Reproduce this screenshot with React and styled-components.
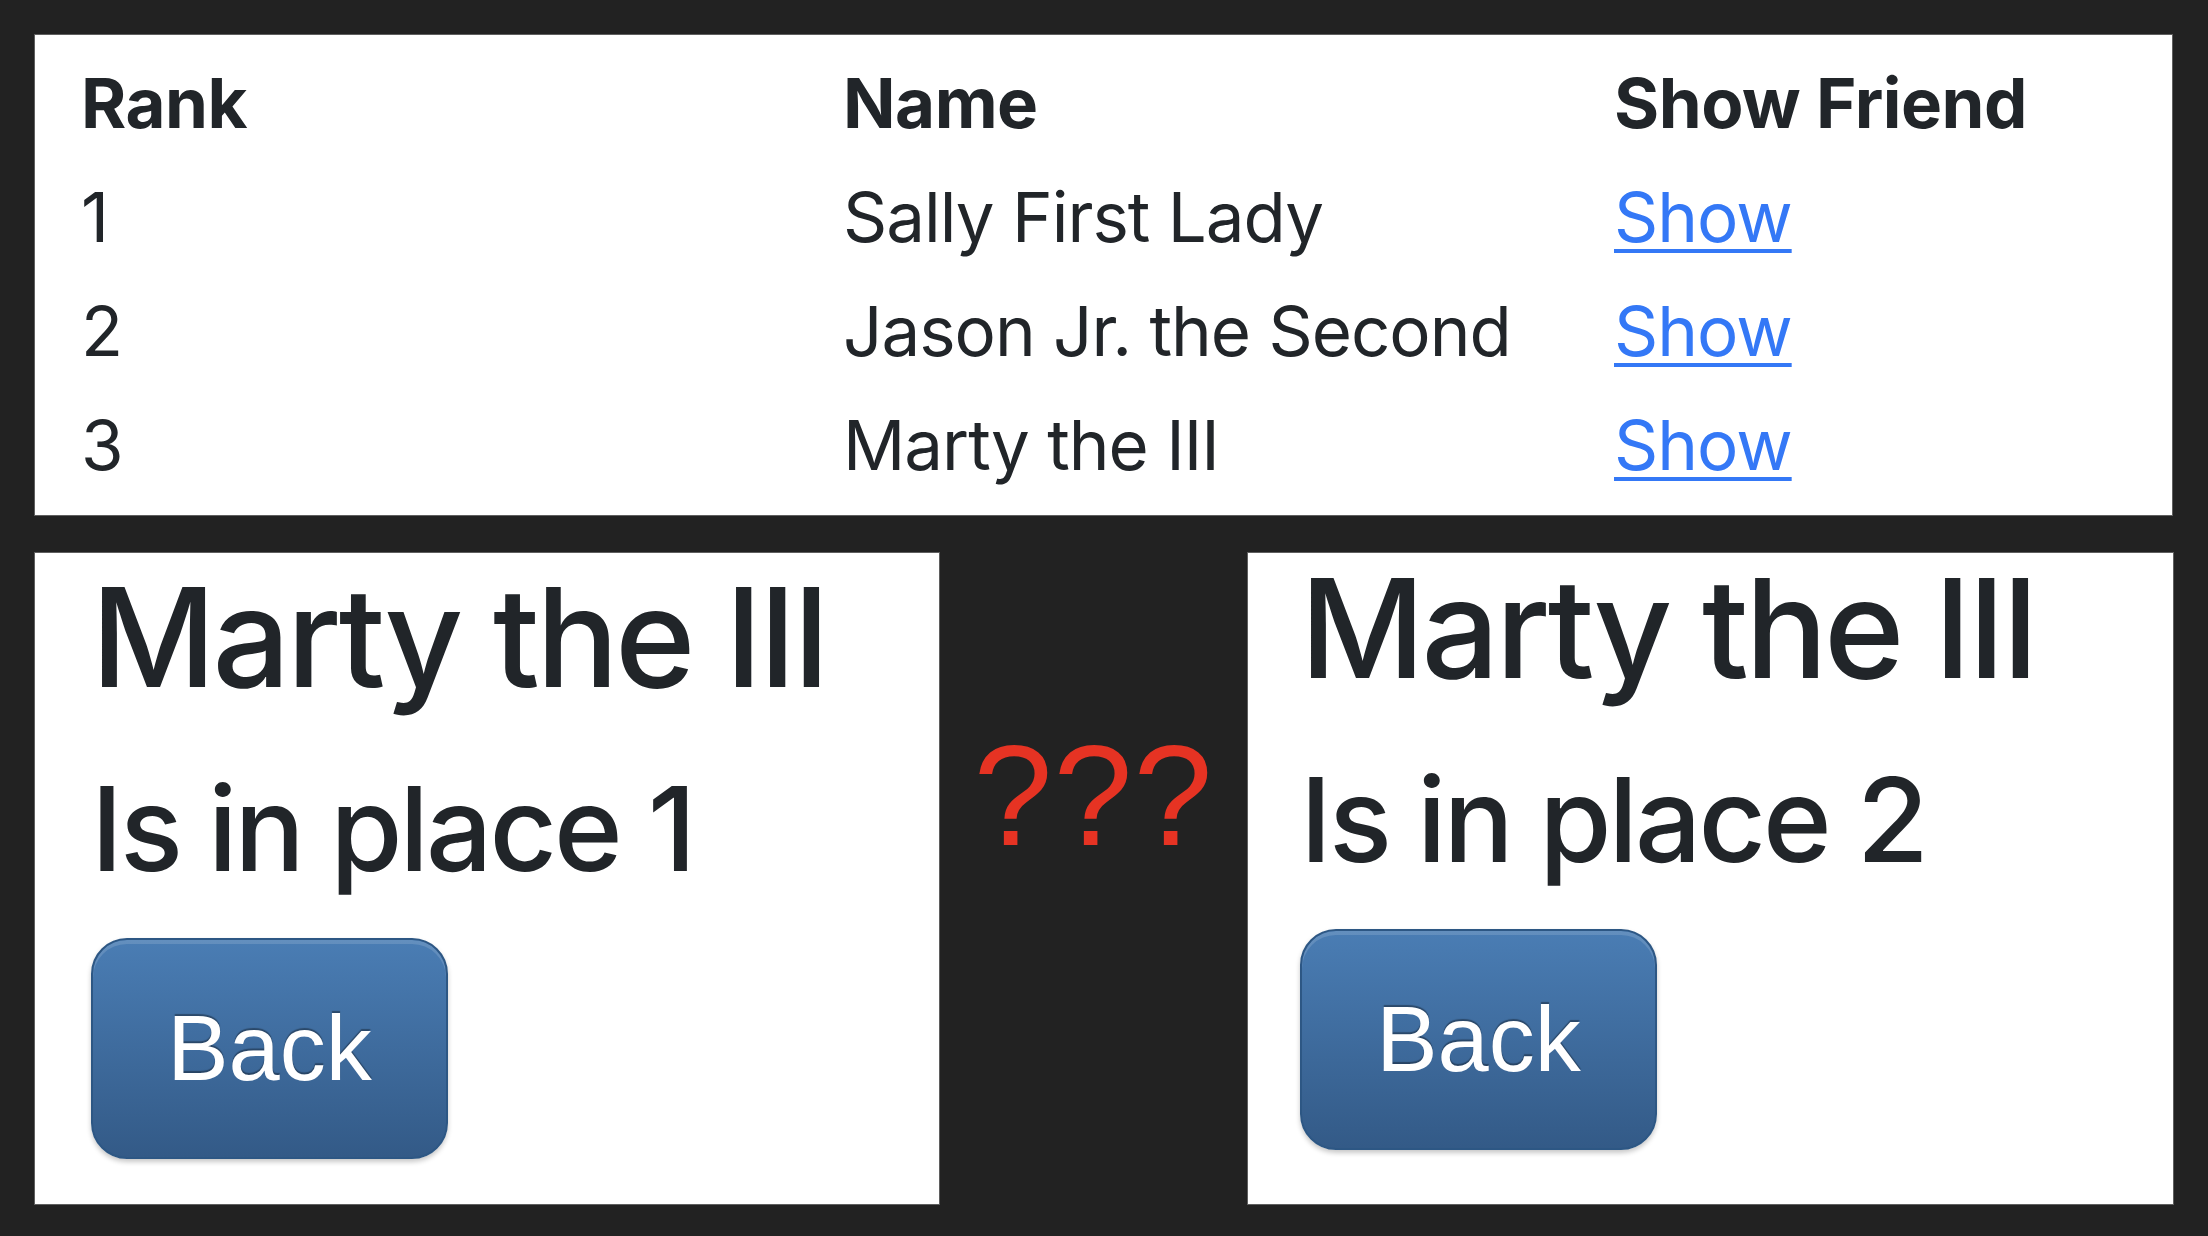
import React from "react";
import styled, { createGlobalStyle } from "styled-components";

const friends = [
  { rank: 1, name: "Sally First Lady" },
  { rank: 2, name: "Jason Jr. the Second" },
  { rank: 3, name: "Marty the III" },
];

const GlobalStyle = createGlobalStyle`
  html, body {
    margin: 0;
    padding: 0;
    background: #222222;
  }
  body {
    font-family: Inter, "Noto Sans", sans-serif;
    color: #212529;
  }
`;

const Page = styled.div`
  width: 2208px;
  height: 1236px;
  box-sizing: border-box;
  padding: 35px 35px 0 35px;
  display: flex;
  flex-direction: column;
  gap: 38px;
`;

const Panel = styled.div`
  background: #ffffff;
  box-shadow: 0 0 0 1px #5f5f5f;
`;

const TablePanel = styled(Panel)`
  width: 2137px;
  height: 480px;
  box-sizing: border-box;
  padding: 11px 0 0 46px;
`;

const Table = styled.table`
  border-collapse: collapse;
  table-layout: fixed;
  width: 2091px;
`;

const Col = styled.col`
  width: ${(p) => p.w}px;
`;

const Cell = styled.td`
  height: 114px;
  padding: 0;
  font-size: 69px;
  line-height: 114px;
  white-space: nowrap;
  letter-spacing: -1px;
  vertical-align: middle;
`;

const HeadCell = styled(Cell).attrs({ as: "th" })`
  font-weight: 700;
  text-align: left;
  letter-spacing: -0.5px;
`;

const ShowLink = styled.a`
  color: #3478f6;
  text-decoration: underline;
  text-decoration-thickness: 4px;
  text-underline-offset: 7px;
  cursor: pointer;
`;

const Bottom = styled.div`
  display: grid;
  grid-template-columns: 904px 309px 925px;
  height: 651px;
`;

const Card = styled(Panel)`
  box-sizing: border-box;
  padding: ${(p) => p.top}px 0 0 ${(p) => p.left}px;
`;

const Title = styled.h1`
  margin: 0 0 47px 0;
  font-size: 137px;
  line-height: 150px;
  font-weight: 500;
  letter-spacing: -3.5px;
`;

const Place = styled.h2`
  margin: 0 0 39px 0;
  font-size: 117px;
  line-height: 140px;
  font-weight: 500;
  letter-spacing: -3px;
`;

const BackButton = styled.button`
  width: 357px;
  height: 221px;
  box-sizing: border-box;
  border: 2px solid #2d5784;
  border-radius: 36px;
  background: linear-gradient(#4a7db4, #335a87);
  box-shadow: inset 0 4px 0 rgba(255, 255, 255, 0.14), 0 3px 5px rgba(0, 0, 0, 0.22);
  color: #ffffff;
  font-family: "Liberation Sans", Arial, sans-serif;
  font-size: 92px;
  text-shadow: 0 -2px 1px rgba(0, 0, 0, 0.35);
  padding: 0;
  cursor: pointer;
`;

const Middle = styled.div`
  display: flex;
  justify-content: center;
  padding-top: 172px;
`;

const Question = styled.span`
  font-family: "Liberation Sans", Arial, sans-serif;
  font-size: 142px;
  line-height: 142px;
  color: #e63323;
  letter-spacing: 1px;
`;

const FriendCard = ({ top, left, place }) => (
  <Card top={top} left={left}>
    <Title>Marty the III</Title>
    <Place>Is in place {place}</Place>
    <BackButton>Back</BackButton>
  </Card>
);

export default function App() {
  return (
    <>
      <GlobalStyle />
      <Page>
        <TablePanel>
          <Table>
            <colgroup>
              <Col w={762} />
              <Col w={771} />
              <Col w={558} />
            </colgroup>
            <thead>
              <tr>
                <HeadCell>Rank</HeadCell>
                <HeadCell>Name</HeadCell>
                <HeadCell>Show Friend</HeadCell>
              </tr>
            </thead>
            <tbody>
              {friends.map((f) => (
                <tr key={f.rank}>
                  <Cell>{f.rank}</Cell>
                  <Cell>{f.name}</Cell>
                  <Cell>
                    <ShowLink>Show</ShowLink>
                  </Cell>
                </tr>
              ))}
            </tbody>
          </Table>
        </TablePanel>
        <Bottom>
          <FriendCard top={9} left={56} place={1} />
          <Middle>
            <Question>???</Question>
          </Middle>
          <FriendCard top={0} left={52} place={2} />
        </Bottom>
      </Page>
    </>
  );
}
